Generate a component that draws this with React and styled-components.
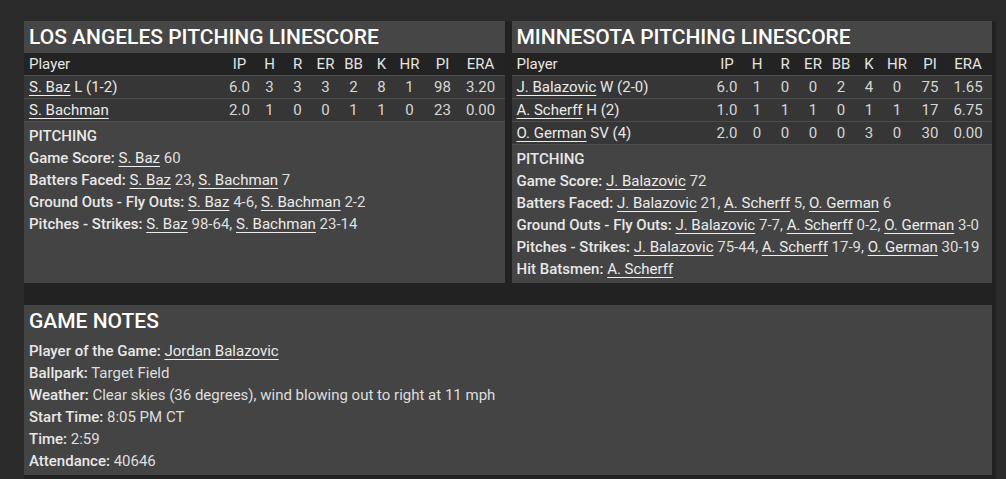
import { createGlobalStyle, styled } from "styled-components";

const GlobalStyle = createGlobalStyle`
    body {
        margin: 0;
        background: #2a2a2a;
        font-family: Roboto, "Liberation Sans", sans-serif;
        color: #e2e2e2;
    }
`;

const Board = styled.div`
    margin: 21px 0 0 24px;
    width: 968px;
    padding-right: 4px;
    min-height: 458px;
    background: #222;
    display: flex;
    flex-direction: column;
    gap: 22px;
`;

const TopRow = styled.div`
    display: flex;
    gap: 7px;
    width: 968px;
`;

const Panel = styled.section`
    flex: 1;
    background: #444;
    display: flex;
    flex-direction: column;
`;

const PanelTitle = styled.h2`
    margin: 0;
    height: 32px;
    line-height: 33px;
    padding: 0 5px;
    font-size: 21px;
    font-weight: 500;
    color: #fff;
    background: ${(p) => (p.$flat ? "#444" : "#464646")};
`;

const StatRow = styled.div`
    display: grid;
    grid-template-columns: 1fr 32px 28px 28px 28px 28px 28px 28px 38px 38px;
    padding: 0 5px;
    height: 23px;
    align-items: center;
    font-size: 15px;
    background: ${(p) => (p.$head ? "#232323" : "#363636")};
    border-bottom: 1px solid #4d4d4d;
    box-sizing: border-box;
    color: ${(p) => (p.$head ? "#e4e4e4" : "#d6d6d6")};
`;

const Cell = styled.span`
    text-align: center;
    white-space: nowrap;
`;

const PlayerCell = styled.span`
    color: #e6e6e6;
    white-space: nowrap;
`;

const PlayerLink = styled.a`
    color: #ececec;
    text-decoration: underline;
    text-underline-offset: 3px;
    text-decoration-thickness: 1px;
`;

const Info = styled.div`
    padding: 3px 5px 3px;
    font-size: 15px;
    line-height: 22px;
    color: #dedede;
`;

const Line = styled.div`
    white-space: nowrap;
`;

const Label = styled.span`
    font-weight: 500;
    color: #e8e8e8;
`;

const Notes = styled.section`
    width: 968px;
    background: #444;
`;

const Player = ({ name }) => <PlayerLink href="#">{name}</PlayerLink>;

const List = ({ items }) =>
    items.map(([name, val], i) => (
        <span key={name}>
            {i > 0 && ", "}
            <Player name={name} /> {val}
        </span>
    ));

const cols = ["IP", "H", "R", "ER", "BB", "K", "HR", "PI", "ERA"];

const Linescore = ({ team, rows, stats }) => (
    <Panel>
        <PanelTitle>{team} PITCHING LINESCORE</PanelTitle>
        <StatRow $head>
            <PlayerCell>Player</PlayerCell>
            {cols.map((c) => <Cell key={c}>{c}</Cell>)}
        </StatRow>
        {rows.map((r) => (
            <StatRow key={r.name}>
                <PlayerCell><Player name={r.name} />{r.note && ` ${r.note}`}</PlayerCell>
                {r.line.map((v, i) => <Cell key={i}>{v}</Cell>)}
            </StatRow>
        ))}
        <Info>
            <Line><Label>PITCHING</Label></Line>
            {stats.map(([label, items]) => (
                <Line key={label}>
                    <Label>{label}:</Label> <List items={items} />
                </Line>
            ))}
        </Info>
    </Panel>
);

const laRows = [
    { name: "S. Baz", note: "L (1-2)", line: ["6.0", 3, 3, 3, 2, 8, 1, 98, "3.20"] },
    { name: "S. Bachman", line: ["2.0", 1, 0, 0, 1, 1, 0, 23, "0.00"] },
];

const laStats = [
    ["Game Score", [["S. Baz", "60"]]],
    ["Batters Faced", [["S. Baz", "23"], ["S. Bachman", "7"]]],
    ["Ground Outs - Fly Outs", [["S. Baz", "4-6"], ["S. Bachman", "2-2"]]],
    ["Pitches - Strikes", [["S. Baz", "98-64"], ["S. Bachman", "23-14"]]],
];

const minRows = [
    { name: "J. Balazovic", note: "W (2-0)", line: ["6.0", 1, 0, 0, 2, 4, 0, 75, "1.65"] },
    { name: "A. Scherff", note: "H (2)", line: ["1.0", 1, 1, 1, 0, 1, 1, 17, "6.75"] },
    { name: "O. German", note: "SV (4)", line: ["2.0", 0, 0, 0, 0, 3, 0, 30, "0.00"] },
];

const minStats = [
    ["Game Score", [["J. Balazovic", "72"]]],
    ["Batters Faced", [["J. Balazovic", "21"], ["A. Scherff", "5"], ["O. German", "6"]]],
    ["Ground Outs - Fly Outs", [["J. Balazovic", "7-7"], ["A. Scherff", "0-2"], ["O. German", "3-0"]]],
    ["Pitches - Strikes", [["J. Balazovic", "75-44"], ["A. Scherff", "17-9"], ["O. German", "30-19"]]],
    ["Hit Batsmen", [["A. Scherff", ""]]],
];

const App = () => {
    return (
        <>
            <GlobalStyle />
            <Board>
                <TopRow>
                    <Linescore team="LOS ANGELES" rows={laRows} stats={laStats} />
                    <Linescore team="MINNESOTA" rows={minRows} stats={minStats} />
                </TopRow>
                <Notes>
                    <PanelTitle $flat>GAME NOTES</PanelTitle>
                    <Info>
                        <Line><Label>Player of the Game:</Label> <Player name="Jordan Balazovic" /></Line>
                        <Line><Label>Ballpark:</Label> Target Field</Line>
                        <Line><Label>Weather:</Label> Clear skies (36 degrees), wind blowing out to right at 11 mph</Line>
                        <Line><Label>Start Time:</Label> 8:05 PM CT</Line>
                        <Line><Label>Time:</Label> 2:59</Line>
                        <Line><Label>Attendance:</Label> 40646</Line>
                    </Info>
                </Notes>
            </Board>
        </>
    );
};

export default App;
